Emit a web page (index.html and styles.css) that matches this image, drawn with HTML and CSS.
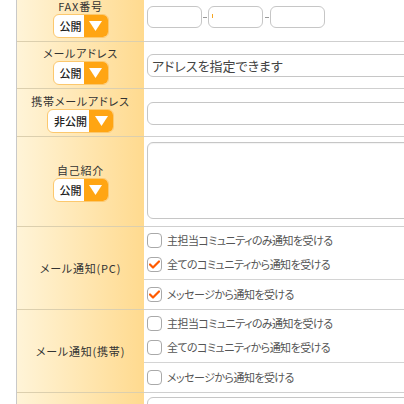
FILE: index.html
```html
<!DOCTYPE html>
<html lang="ja">
<head>
<meta charset="utf-8">
<link rel="stylesheet" href="styles.css">
</head>
<body>
<div class="form">
  <div class="row r-fax">
    <div class="head">
      <div class="label">FAX番号</div>
      <div class="sel"><span class="sel-text">公開</span><span class="sel-btn"><svg width="13" height="10" viewBox="0 0 13 10"><polygon points="0,0 13,0 6.5,10" fill="#fff"/></svg></span></div>
    </div>
    <div class="cell fax">
      <input class="tx short" type="text" value="">
      <span class="dash"></span>
      <span class="caret-wrap"><input class="tx short" type="text" value=""><span class="caret"></span></span>
      <span class="dash"></span>
      <input class="tx short" type="text" value="">
    </div>
  </div>
  <div class="row r-mail">
    <div class="head">
      <div class="label">メールアドレス</div>
      <div class="sel"><span class="sel-text">公開</span><span class="sel-btn"><svg width="13" height="10" viewBox="0 0 13 10"><polygon points="0,0 13,0 6.5,10" fill="#fff"/></svg></span></div>
    </div>
    <div class="cell">
      <input class="tx long" type="text" value="アドレスを指定できます">
    </div>
  </div>
  <div class="row r-mobile">
    <div class="head">
      <div class="label">携帯メールアドレス</div>
      <div class="sel"><span class="sel-text">非公開</span><span class="sel-btn"><svg width="13" height="10" viewBox="0 0 13 10"><polygon points="0,0 13,0 6.5,10" fill="#fff"/></svg></span></div>
    </div>
    <div class="cell">
      <input class="tx long" type="text" value="">
    </div>
  </div>
  <div class="row r-intro">
    <div class="head">
      <div class="label">自己紹介</div>
      <div class="sel"><span class="sel-text">公開</span><span class="sel-btn"><svg width="13" height="10" viewBox="0 0 13 10"><polygon points="0,0 13,0 6.5,10" fill="#fff"/></svg></span></div>
    </div>
    <div class="cell">
      <textarea class="area"></textarea>
    </div>
  </div>
  <div class="row r-notify">
    <div class="head">
      <div class="label">メール通知(PC)</div>
    </div>
    <div class="cell checks">
      <div class="group">
        <div class="ck"><span class="box"></span>主担当コミュニティのみ通知を受ける</div>
        <div class="ck"><span class="box"><svg width="11" height="9" viewBox="0 0 11 9"><polyline points="1,4.5 4,7.5 10,1.5" fill="none" stroke="#ff5a00" stroke-width="2.2" stroke-linecap="round" stroke-linejoin="round"/></svg></span>全てのコミュニティから通知を受ける</div>
      </div>
      <div class="group single">
        <div class="ck"><span class="box"><svg width="11" height="9" viewBox="0 0 11 9"><polyline points="1,4.5 4,7.5 10,1.5" fill="none" stroke="#ff5a00" stroke-width="2.2" stroke-linecap="round" stroke-linejoin="round"/></svg></span>メッセージから通知を受ける</div>
      </div>
    </div>
  </div>
  <div class="row r-notify">
    <div class="head">
      <div class="label">メール通知(携帯)</div>
    </div>
    <div class="cell checks">
      <div class="group">
        <div class="ck"><span class="box"></span>主担当コミュニティのみ通知を受ける</div>
        <div class="ck"><span class="box"></span>全てのコミュニティから通知を受ける</div>
      </div>
      <div class="group single">
        <div class="ck"><span class="box"></span>メッセージから通知を受ける</div>
      </div>
    </div>
  </div>
  <div class="row r-last">
    <div class="head"></div>
    <div class="cell top">
      <input class="tx long" type="text" value="">
    </div>
  </div>
</div>
</body>
</html>
```
FILE: styles.css
```css
html, body {
  margin: 0;
  padding: 0;
  background: #fff;
  overflow: hidden;
  width: 404px;
  height: 404px;
}
body {
  font-family: "Noto Sans CJK JP", sans-serif;
  color: #333;
}
.form {
  margin-top: -7px;
  margin-left: 16px;
  width: 560px;
  border-left: 1px solid #c9c9c9;
}
.row {
  display: flex;
  align-items: stretch;
}
.r-fax { height: 49px; }
.r-mail { height: 47px; }
.r-mobile { height: 48px; }
.r-intro { height: 90px; }
.r-notify { height: 83px; }
.r-last { height: 60px; }
.head {
  box-sizing: border-box;
  width: 127px;
  flex: none;
  background: linear-gradient(to right, #fff4d8, #ffda8f);
  border-bottom: 1px solid #dccfae;
  display: flex;
  flex-direction: column;
  align-items: center;
  justify-content: center;
}
.r-fax .head {
  padding-top: 1px;
}
.label {
  font-size: 11px;
  line-height: 16px;
  color: #333;
  font-feature-settings: "palt";
  letter-spacing: 0.8px;
}
.sel {
  display: flex;
  height: 22px;
  border: 1px solid #fcc86e;
  border-radius: 6px;
  overflow: hidden;
  background: #fff;
}
.sel-text {
  font-size: 11px;
  line-height: 22px;
  padding: 0 2px 0 6px;
  min-width: 22px;
  color: #222;
  font-weight: 500;
}
.sel-btn {
  width: 24px;
  background: #ffa513;
  display: flex;
  align-items: center;
  justify-content: center;
}
.cell {
  box-sizing: border-box;
  flex: 1;
  border-bottom: 1px solid #cfcfcf;
  padding-left: 3px;
  display: flex;
  align-items: center;
}
.cell.top {
  align-items: flex-start;
  padding-top: 4px;
}
.r-mobile .cell {
  padding-top: 1px;
}
.tx {
  box-sizing: border-box;
  height: 23px;
  border: 1px solid #c6c6c6;
  border-radius: 6px;
  background: #fff;
  font-family: "Noto Sans CJK JP", sans-serif;
  font-size: 13px;
  color: #444;
  padding: 0 4px;
  margin: 0;
  outline: none;
  font-feature-settings: "palt";
}
.short {
  width: 55px;
  height: 22px;
}
.long {
  width: 420px;
}
.dash {
  display: inline-block;
  width: 4px;
  height: 1px;
  background: #999;
  margin: 0 1px;
}
.caret-wrap {
  position: relative;
  display: flex;
  margin-right: 1px;
}
.caret {
  position: absolute;
  left: 4px;
  top: 8px;
  width: 1px;
  height: 4px;
  background: #f5a623;
}
.area {
  box-sizing: border-box;
  width: 420px;
  height: 77px;
  border: 1px solid #c6c6c6;
  border-radius: 6px;
  resize: none;
  margin: -2px 0 0 0;
  outline: none;
  box-shadow: inset 0 1px 1px rgba(0,0,0,0.05);
}
.checks {
  flex-direction: column;
  align-items: stretch;
  padding-left: 0;
}
.group {
  box-sizing: border-box;
  height: 53px;
  display: flex;
  flex-direction: column;
  gap: 8px;
  padding: 5px 0 0 3px;
  border-bottom: 1px solid #d4d4d4;
}
.group.single {
  height: 29px;
  border-bottom: none;
  padding: 6px 0 0 3px;
}
.ck {
  display: flex;
  align-items: center;
  height: 16px;
  font-size: 11px;
  letter-spacing: -0.55px;
  color: #555;
  font-feature-settings: "palt";
}
.box {
  box-sizing: border-box;
  width: 15px;
  height: 15px;
  border: 1px solid #a9a9a9;
  border-radius: 4px;
  background: #fff;
  margin-right: 5px;
  display: flex;
  align-items: center;
  justify-content: center;
  flex: none;
}
```
